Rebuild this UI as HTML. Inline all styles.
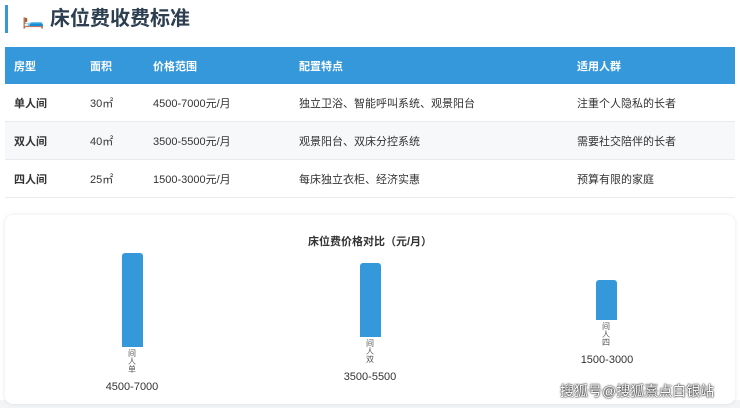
<!DOCTYPE html>
<html><head><meta charset="utf-8"><style>
body{margin:0;width:740px;height:408px;background:#fff;font-family:"Liberation Sans","Noto Sans CJK SC",sans-serif;position:relative;overflow:hidden;color:#333}
.h{position:absolute;left:5px;top:5px;height:28px;border-left:3px solid #3498db;padding-left:14px;font-size:20px;font-weight:bold;line-height:28px;color:#2c3e50}
table{position:absolute;left:5px;top:47px;width:730px;border-collapse:collapse;font-size:11px}
th{background:#3498db;color:#fff;text-align:left;height:37px;padding:0 0 0 9px;font-weight:bold}
td{height:37px;padding:0 0 0 9px;border-bottom:1px solid #e8ebee}
tr:nth-child(odd) td{background:#f7f8fa}
td:first-child{font-weight:bold}
.bg{position:absolute;left:0;top:400px;width:740px;height:8px;background:#f3f4f6}
.card{position:absolute;left:5px;top:215px;width:730px;height:189px;background:#fff;border-radius:8px;box-shadow:0 0 4px rgba(0,0,0,.1)}
.t{position:absolute;top:233px;left:0;width:740px;text-align:center;font-size:11px;font-weight:bold}
.bar{position:absolute;width:21px;background:#3498db;border-radius:3px 3px 0 0}
.v{position:absolute;width:20px;font-size:8px;line-height:8px;text-align:center;color:#555}
.l{position:absolute;width:100px;text-align:center;font-size:11px;color:#333}
.w{position:absolute;left:560px;top:381px;font-size:14px;color:#fff;text-shadow:0 0 2px #000,0 0 1px #000}
</style></head><body>
<div class="h"><span style="font-size:18px">🛏️</span> 床位费收费标准</div>
<table>
<tr><th style="width:67px">房型</th><th style="width:54px">面积</th><th style="width:137px">价格范围</th><th style="width:269px">配置特点</th><th>适用人群</th></tr>
<tr><td>单人间</td><td>30㎡</td><td>4500-7000元/月</td><td>独立卫浴、智能呼叫系统、观景阳台</td><td>注重个人隐私的长者</td></tr>
<tr><td>双人间</td><td>40㎡</td><td>3500-5500元/月</td><td>观景阳台、双床分控系统</td><td>需要社交陪伴的长者</td></tr>
<tr><td>四人间</td><td>25㎡</td><td>1500-3000元/月</td><td>每床独立衣柜、经济实惠</td><td>预算有限的家庭</td></tr>
</table>
<div class="bg"></div>
<div class="card"></div>
<div class="t">床位费价格对比（元/月）</div>
<div class="bar" style="left:122px;top:253px;height:94px"></div>
<div class="v" style="left:122px;top:350px">间<br>人<br>单</div>
<div class="l" style="left:82px;top:381px">4500-7000</div>
<div class="bar" style="left:360px;top:263px;height:74px"></div>
<div class="v" style="left:360px;top:340px">间<br>人<br>双</div>
<div class="l" style="left:320px;top:371px">3500-5500</div>
<div class="bar" style="left:596px;top:280px;height:40px"></div>
<div class="v" style="left:596px;top:323px">间<br>人<br>四</div>
<div class="l" style="left:557px;top:354px">1500-3000</div>
<div class="w">搜狐号@搜狐熹点白银站</div>
</body></html>
